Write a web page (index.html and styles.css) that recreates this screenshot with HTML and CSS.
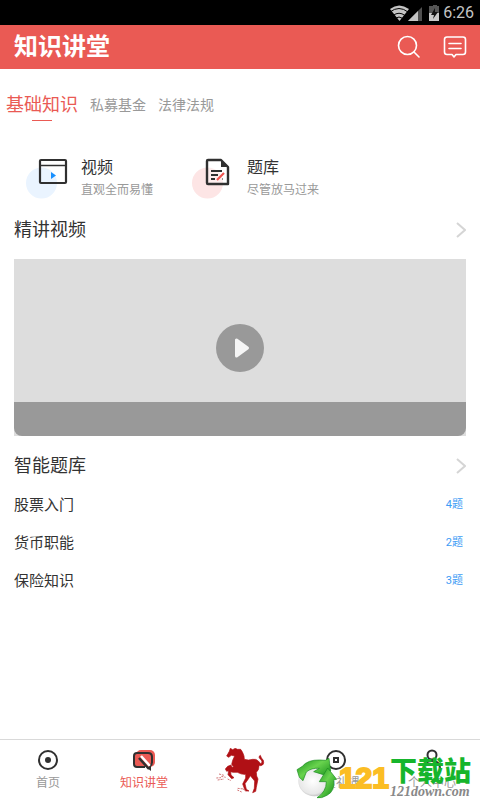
FILE: index.html
```html
<!DOCTYPE html>
<html lang="zh-CN">
<head>
<meta charset="utf-8">
<meta name="viewport" content="width=device-width, initial-scale=1">
<title>知识讲堂</title>
<link rel="stylesheet" href="styles.css">
</head>
<body>
<div class="status">
  <svg width="54" height="20" viewBox="0 0 54 20" aria-hidden="true">
    <path d="M1 6Q10-1 20 6L10.500 18Z" fill="#c4c4c4"/>
    <path d="M1 9Q10 2 19 9M4 12.500Q10 8 16 12.500M6 15.500Q10 12.500 14 15.500" fill="none" stroke="#000" stroke-width="1"/>
    <path d="M33 4V18H19Z" fill="#505050"/><path d="M29 8V18H19Z" fill="#c4c4c4"/>
    <path d="M42 3H44V2H48V3H50V10H40V3Z" fill="#555"/><path d="M40 10H50V18H40Z" fill="#c8c8c8"/>
    <path d="M46 5L42 12H45L44 16L49 9H46Z" fill="#111"/>
  </svg>
  <span>6:26</span>
</div>
<header class="header">
  <h1>知识讲堂</h1>
  <button type="button" aria-label="搜索"><svg width="24" height="24" viewBox="0 0 24 24"><circle cx="10.500" cy="10.500" r="9"/><path d="M17 17L22 22"/></svg></button>
  <button type="button" aria-label="消息"><svg width="24" height="24" viewBox="0 0 24 24"><path d="M4 2H20Q22.500 2 22.500 4.500V17Q22.500 19.500 20 19.500H13L11 22L9 19.500H4Q1.500 19.500 1.500 17V4.500Q1.500 2 4 2ZM6 8.500H18M6 13.500H18"/></svg></button>
</header>
<main class="main">
  <nav class="tabs" aria-label="分类">
    <a class="tab active" href="#basic">基础知识</a>
    <a class="tab" href="#fund">私募基金</a>
    <a class="tab" href="#law">法律法规</a>
  </nav>
  <div class="entries">
    <a class="entry" href="#video">
      <svg width="44" height="44" viewBox="0 0 44 44" aria-hidden="true">
        <circle cx="15.500" cy="27" r="15.500" fill="#eaf4ff"/>
        <rect x="14" y="4" width="26" height="23" rx="1" fill="none" stroke="#303030" stroke-width="2.200"/>
        <path d="M14 9.500H40" stroke="#303030" stroke-width="1.500"/><path d="M25 16L30 19.500L25 23Z" fill="#1890ff"/>
      </svg>
      <span class="entry-text"><strong>视频</strong><small>直观全而易懂</small></span>
    </a>
    <a class="entry" href="#questions">
      <svg width="44" height="44" viewBox="0 0 44 44" aria-hidden="true">
        <circle cx="15.500" cy="27" r="15.500" fill="#fde5e5"/>
        <path d="M16 4H29L36 11V28H16Q15 28 15 27V5Q15 4 16 4Z" fill="#fff" fill-opacity=".3" stroke="#303030" stroke-width="2.400" stroke-linejoin="round"/>
        <path d="M29 4V11H36Z" fill="#303030"/><path d="M19 15H30M19 19H26M19 23H23" stroke="#303030" stroke-width="1.800"/>
        <path d="M25 24L32 17" stroke="#f0534f" stroke-width="2.200"/><path d="M30 23H31" stroke="#303030"/>
      </svg>
      <span class="entry-text"><strong>题库</strong><small>尽管放马过来</small></span>
    </a>
  </div>
  <section id="video">
    <a class="heading" href="#videos"><h2>精讲视频</h2><svg width="10" height="16" viewBox="0 0 10 16" aria-hidden="true"><path d="M1 1L9 8L1 15"/></svg></a>
    <div class="video">
      <button class="play" type="button" aria-label="播放"><svg width="48" height="48" viewBox="0 0 48 48"><path d="M20.500 16V32L31.500 24Z" fill="#f5f5f5" stroke="#f5f5f5" stroke-width="3" stroke-linejoin="round"/></svg></button>
      <div class="caption"></div>
    </div>
  </section>
  <section id="questions">
    <a class="heading" href="#banks"><h2>智能题库</h2><svg width="10" height="16" viewBox="0 0 10 16" aria-hidden="true"><path d="M1 1L9 8L1 15"/></svg></a>
    <ul class="banks">
      <li><a href="#stock"><span>股票入门</span><span class="count">4题</span></a></li>
      <li><a href="#money"><span>货币职能</span><span class="count">2题</span></a></li>
      <li><a href="#insurance"><span>保险知识</span><span class="count">3题</span></a></li>
    </ul>
  </section>
</main>
<footer class="footer">
  <nav class="nav" aria-label="主导航">
    <a href="#home"><svg width="24" height="24" viewBox="0 0 24 24"><circle cx="12" cy="12" r="9" fill="none" stroke="#303030" stroke-width="2"/><circle cx="12" cy="12" r="3" fill="#303030"/></svg><span>首页</span></a>
    <a class="current" href="#class"><svg width="24" height="24" viewBox="0 0 24 24"><rect x="4" y="2" width="19" height="17" rx="5" fill="#ea5a54"/><path d="M13 19H5Q2 19 2 16V8Q2 5 5 5H16Q20 5 20 9V14Q20 17 18 18" fill="#ea5a54" stroke="#303030" stroke-width="2"/><path d="M7 10L17 21" stroke="#303030" stroke-width="2.500"/><path d="M9 8L18 18" stroke="#fff" stroke-width="2.500"/><path d="M15 20L19 23V17Z" fill="#303030"/></svg><span>知识讲堂</span></a>
    <a class="horse" href="#horse" aria-label="骏马"><svg width="50" height="46" viewBox="45 39 150 138">
      <path fill="#b01015" stroke="#b01015" stroke-width="2" stroke-linejoin="round" d="M91 40L98 44L106 40L112 43L122 43L126 49L129 55L132 63L133 73Q145 77 158 73Q169 71 175 78L182 86Q189 82 184 75Q172 66 181 61Q183 69 190 76Q194 90 182 92L177 91Q178 104 169 112L170 123L174 132L169 157L167 169L158 173L163 160L164 138L151 122L145 132L135 146L139 163L147 168L136 168L128 147L137 129L137 118Q124 119 112 112L99 112L92 110L93 120L102 128L95 131L84 119L86 107L80 109L76 102L83 94L93 90L96 97L101 96L95 88L98 76L104 63L94 61L86 67L80 63L88 49Z"/>
      <path d="M57 117L72 121M49 129L63 128M53 135L72 132M64 124L77 127M83 132L93 137M113 160L130 162M112 165L125 171M128 161L137 167" stroke="#d27778" stroke-width="3" stroke-dasharray="6 3"/>
    </svg></a>
    <a href="#gifts"><svg width="24" height="24" viewBox="0 0 24 24"><circle cx="12" cy="12" r="9" fill="none" stroke="#303030" stroke-width="2"/><rect x="10" y="10" width="4" height="4" fill="none" stroke="#303030" stroke-width="2"/></svg><span>会员礼遇</span></a>
    <a href="#me"><svg width="24" height="24" viewBox="0 0 24 24"><circle cx="12" cy="7" r="4.500" fill="none" stroke="#303030" stroke-width="2"/><path d="M4 21Q4 13 12 13Q20 13 20 21" fill="none" stroke="#303030" stroke-width="2"/></svg><span>个人中心</span></a>
  </nav>
  <div class="mark">
    <svg width="42" height="42" viewBox="33 66 126 126" aria-hidden="true">
      <defs><radialGradient id="ball" cx=".45" cy=".5" r=".6"><stop offset="0" stop-color="#fff"/><stop offset=".7" stop-color="#e8e8e8"/><stop offset="1" stop-color="#999"/></radialGradient><linearGradient id="leaf" x2="1" y2="1"><stop stop-color="#128c18"/><stop offset=".45" stop-color="#69d34e"/><stop offset="1" stop-color="#078410"/></linearGradient></defs>
      <ellipse cx="88" cy="138" rx="48" ry="46" fill="url(#ball)"/>
      <path d="M36 104L52 94Q68 74 104 75L121 76L132 70L137 108L115 119L86 110L103 100Q79 98 64 111L54 137L43 127Z" fill="url(#leaf)" stroke="#188b20" stroke-width="2"/>
      <path d="M128 99L155 133L146 135Q151 168 126 181Q109 191 96 188Q124 171 124 140L103 140Z" fill="url(#leaf)" stroke="#188b20" stroke-width="2"/>
    </svg>
    <span class="digits">121</span>
    <span class="site"><b>下载站</b><i>121down.com</i></span>
  </div>
</footer>
</body>
</html>
```
FILE: styles.css
```css
* { box-sizing: border-box; }
body {
  margin: 0;
  min-height: 100vh;
  display: flex;
  flex-direction: column;
  background: #fff;
  color: #333;
  font-family: Roboto, "Noto Sans CJK SC", sans-serif;
}
a { color: inherit; text-decoration: none; }
button { border: 0; padding: 0; background: none; }
svg { display: block; flex: none; }
h1, h2 { margin: 0; }
.status {
  height: 25px;
  padding: 0 6px;
  display: flex;
  align-items: center;
  justify-content: flex-end;
  background: #000;
  color: #c4c4c4;
  font-size: 16px;
}
.header {
  height: 44px;
  padding: 0 13px 0 14px;
  display: flex;
  align-items: center;
  gap: 22px;
  background: #ea5a54;
  color: #fff;
}
.header h1 { flex: 1; font-size: 24px; line-height: 44px; font-weight: 700; }
.header svg { fill: none; stroke: #fff; stroke-width: 1.6px; stroke-linecap: round; stroke-linejoin: round; }
.main { flex: 1; }
.tabs {
  display: flex;
  align-items: flex-end;
  gap: 12px;
  padding: 20px 6px 0;
}
.tab { color: #999; font-size: 14px; line-height: 32px; }
.tab.active { position: relative; color: #ea5a54; font-size: 18px; }
.tab.active::after {
  content: "";
  position: absolute;
  bottom: 0;
  left: 26px;
  width: 20px;
  height: 1px;
  background: #ea5a54;
}
.entries {
  display: grid;
  grid-template-columns: 166px 1fr;
  padding: 35px 26px 0;
}
.entry { display: flex; gap: 11px; }
.entry-text { display: flex; flex-direction: column; }
.entry strong { font-size: 16px; line-height: 24px; font-weight: 400; }
.entry small { color: #999; font-size: 12px; line-height: 20px; }
.heading {
  display: flex;
  align-items: center;
  justify-content: space-between;
  padding: 16px 14px 15px;
}
.heading h2 { font-size: 18px; line-height: 28px; font-weight: 400; }
.heading path { fill: none; stroke: #d5d5d5; stroke-width: 2px; }
.video {
  margin: 0 14px;
  height: 177px;
  display: flex;
  flex-direction: column;
  align-items: center;
  justify-content: flex-end;
  background: #ddd;
}
.play { margin-bottom: 30px; border-radius: 50%; background: #999; }
.caption { width: 100%; height: 34px; border-radius: 0 0 8px 8px; background: #999; }
.banks { margin: 0; padding: 0 17px 0 14px; list-style: none; }
.banks a {
  display: flex;
  align-items: center;
  justify-content: space-between;
  font-size: 15px;
  line-height: 38px;
}
#questions .heading { padding-bottom: 6px; }
.banks .count { color: #3e9cf5; font-size: 11px; }
.footer { position: relative; border-top: 1px solid #d9d9d9; }
.nav { display: grid; grid-template-columns: repeat(5, 1fr); height: 60px; }
.nav a {
  display: flex;
  flex-direction: column;
  align-items: center;
  padding-top: 8px;
  color: #999;
  font-size: 12px;
  line-height: 22px;
}
.nav .current { color: #ea5a54; }
.mark {
  position: absolute;
  right: 9px;
  bottom: 1px;
  display: flex;
  align-items: center;
}
.digits {
  padding: 0 1px;
  color: #fbbd24;
  font: 700 30px/40px "Liberation Sans", sans-serif;
  -webkit-text-stroke: 2px #fbbd24;
}
.site { display: flex; flex-direction: column; }
.site b { color: #16b52c; font-size: 27px; line-height: 27px; font-weight: 900; }
.site i { color: #888; font: italic 700 14px/12px "Liberation Serif", serif; }
```
